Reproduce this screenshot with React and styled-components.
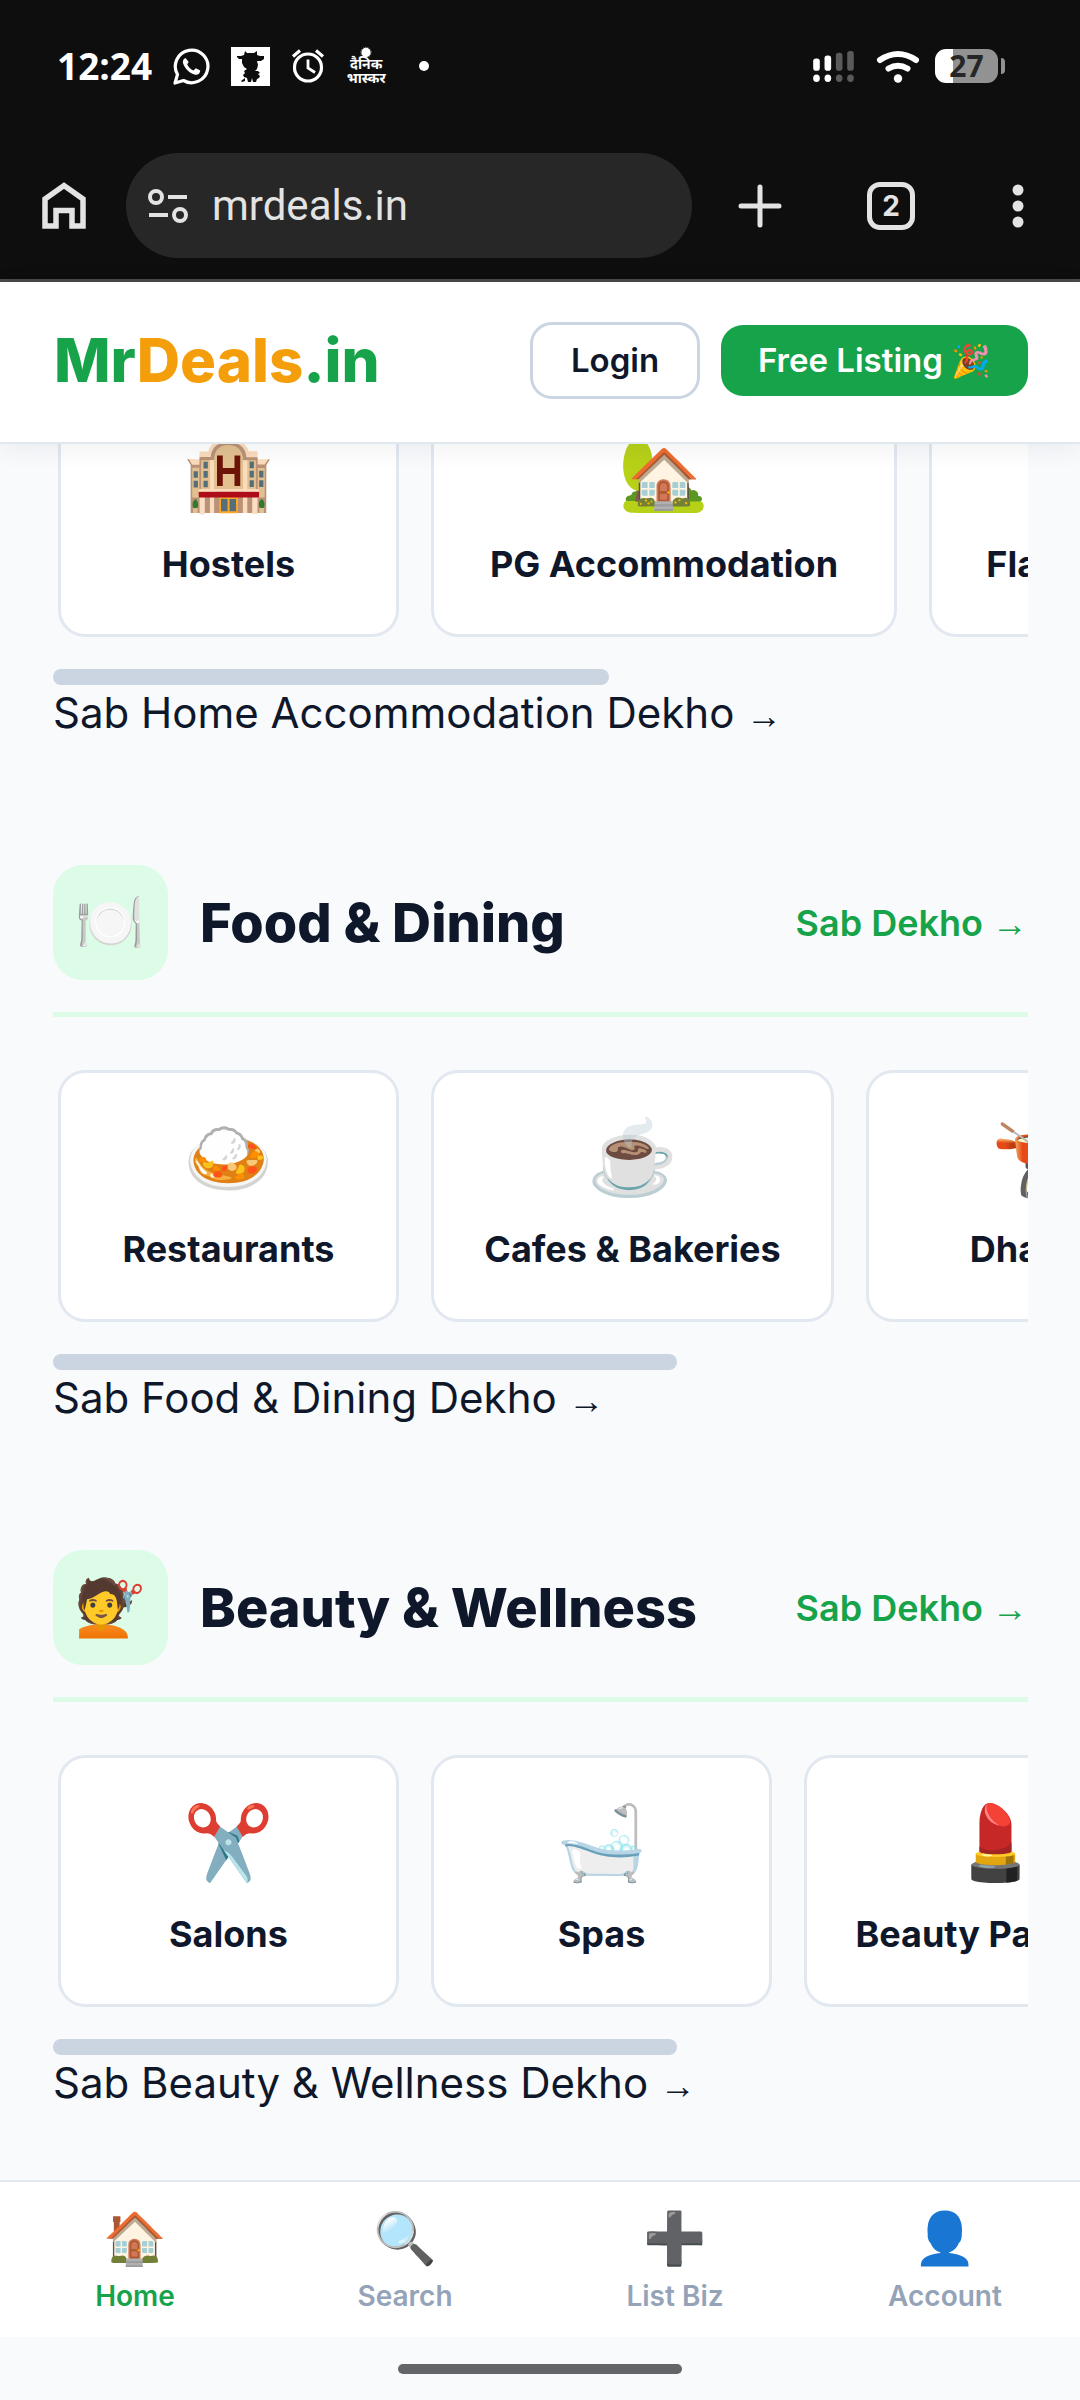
import React, { useState } from 'react';
import styled, { createGlobalStyle } from 'styled-components';

const sections = [
  {
    id: 'home',
    more: 'Sab Home Accommodation Dekho',
    thumb: 57,
    items: [
      { icon: '🏨', name: 'Hostels', width: 341 },
      { icon: '🏡', name: 'PG Accommodation', width: 466 },
      { icon: '🏢', name: 'Flats & Apartments', width: 450 },
    ],
  },
  {
    id: 'food',
    icon: '🍽️',
    title: 'Food & Dining',
    more: 'Sab Food & Dining Dekho',
    thumb: 64,
    items: [
      { icon: '🍛', name: 'Restaurants', width: 341 },
      { icon: '☕', name: 'Cafes & Bakeries', width: 403 },
      { icon: '🫕', name: 'Dhabas', width: 341 },
    ],
  },
  {
    id: 'beauty',
    icon: '💇',
    title: 'Beauty & Wellness',
    more: 'Sab Beauty & Wellness Dekho',
    thumb: 64,
    items: [
      { icon: '✂️', name: 'Salons', width: 341 },
      { icon: '🛁', name: 'Spas', width: 341 },
      { icon: '💄', name: 'Beauty Parlours', width: 384 },
    ],
  },
];

const tabs = [
  { id: 'home', icon: '🏠', name: 'Home' },
  { id: 'search', icon: '🔍', name: 'Search' },
  { id: 'list', icon: '➕', name: 'List Biz' },
  { id: 'account', icon: '👤', name: 'Account' },
];

const StatusBar = () => (
  <Status>
    <StatusGroup>
      <Time>12:24</Time>
      {/* whatsapp */}
      <svg width="37" height="37" viewBox="0 0 37 37" fill="none">
        <path
          d="M2 35l2.500-8.500A16.300 16.300 0 1 1 10.500 32.500z"
          stroke="#fff"
          strokeWidth="3.2"
          strokeLinejoin="round"
        />
        <path
          d="M12.500 10c-2.500 1-3.200 3.500-2.200 6 2 5 6 9 11 10.500 3 1 5.800-.5 6-4l-4.500-2.300-2.300 2.300c-3-1.200-5-3.200-6.300-6.200l1.500-2.300z"
          fill="#fff"
        />
      </svg>
      {/* mascot */}
      <svg width="39" height="39" viewBox="0 0 39 39">
        <path d="M0 0h39v39H0z" fill="#fff" />
        <path
          d="M14 4l2 2h7l3-2v4l3 1h4v3l-3 2h-4l1 4-1 4-2 2h3l2 2-2 1 2 2-1 2-2 1-1 3h-3l-1-4-1 4h-3l-1-4-3-1-1-2 2-2-1-2 3-2-3-2-2-4v-4H8l-2-2V9h4l3-1z"
          fill="#0e0e0e"
        />
        <path d="M10 34l4-3v3l-3 1z" fill="#0e0e0e" />
      </svg>
      {/* alarm */}
      <svg width="34" height="34" viewBox="0 0 34 34" fill="none" stroke="#fff">
        <circle cx="17" cy="18.5" r="13.5" strokeWidth="3.2" />
        <path d="M17 10.500v8.500l7 4.500" strokeWidth="2.8" />
        <path d="M2 7.500l7-6M32 7.500l-7-6" strokeWidth="3.2" />
      </svg>
      <NewsBadge>
        <svg width="14" height="13" viewBox="0 0 14 14">
          <circle cx="7" cy="7" r="5" fill="#fff" />
          <circle
            cx="7"
            cy="7"
            r="5.5"
            fill="none"
            stroke="#aaa"
            strokeDasharray="1 1"
          />
        </svg>
        <span>दैनिक</span>
        <span>भास्कर</span>
      </NewsBadge>
      <Dot />
    </StatusGroup>
    <StatusGroup>
      {/* two sims */}
      <svg width="43" height="34" viewBox="0 0 43 36">
        <g fill="#fff">
          <rect x="0" y="10" width="7" height="13" rx="3" />
          <rect x="12" y="7" width="7" height="16" rx="3" />
          <ellipse cx="3.5" cy="31" rx="3.5" ry="4" />
          <ellipse cx="15.5" cy="31" rx="3.5" ry="4" />
        </g>
        <g fill="#5a5a5a">
          <rect x="24" y="4" width="7" height="19" rx="3" />
          <rect x="36" y="2" width="7" height="21" rx="3" />
          <ellipse cx="27.5" cy="31" rx="3.5" ry="4" />
          <ellipse cx="39.5" cy="31" rx="3.5" ry="4" />
        </g>
      </svg>
      <svg width="44" height="34" viewBox="0 0 44 34" fill="none">
        <path
          d="M4 11Q22-1 40 11M12.500 19.500Q22 14 31.500 19.500"
          stroke="#fff"
          strokeWidth="6"
          strokeLinecap="round"
        />
        <circle cx="22" cy="29.5" r="4.2" fill="#fff" />
      </svg>
      <BatteryWrap>
        <Battery>27</Battery>
        <BatteryCap />
      </BatteryWrap>
    </StatusGroup>
  </Status>
);

const BrowserBar = () => (
  <Toolbar>
    <ToolButton aria-label="Home page">
      <svg width="44" height="48" viewBox="0 0 44 48" fill="none">
        <path
          d="M3 17L22 3.500l19 13.500V44H30V28.500H14V44H3z"
          stroke="#e3e3e3"
          strokeWidth="5.5"
        />
      </svg>
    </ToolButton>
    <AddressBox>
      <svg width="40" height="34" viewBox="0 0 40 34" fill="none">
        <g stroke="#e3e3e3" strokeWidth="4">
          <circle cx="8" cy="8" r="6" />
          <circle cx="32" cy="26" r="6" />
          <path d="M20 8h19M1 26h19" />
        </g>
      </svg>
      <Address aria-label="Address" defaultValue="mrdeals.in" />
    </AddressBox>
    <Tools>
      <ToolButton aria-label="New tab">
        <svg width="44" height="44" viewBox="0 0 44 44">
          <path
            d="M22 3v38M3 22h38"
            stroke="#e3e3e3"
            strokeWidth="5"
            strokeLinecap="round"
          />
        </svg>
      </ToolButton>
      <TabCount aria-label="Tabs">2</TabCount>
      <MenuButton aria-label="Menu">
        <svg width="12" height="44" viewBox="0 0 12 44" fill="#e3e3e3">
          <circle cx="6" cy="6" r="5.5" />
          <circle cx="6" cy="22" r="5.5" />
          <circle cx="6" cy="38" r="5.5" />
        </svg>
      </MenuButton>
    </Tools>
  </Toolbar>
);

const App = () => {
  const [current, setCurrent] = useState('home');

  return (
    <Screen>
      <GlobalStyle />
      <Chrome>
        <StatusBar />
        <BrowserBar />
      </Chrome>
      <Header>
        <Logo href="#">
          Mr<span>Deals</span>.in
        </Logo>
        <Actions>
          <LoginButton>Login</LoginButton>
          <ListingButton>
            Free Listing <Emoji>🎉</Emoji>
          </ListingButton>
        </Actions>
      </Header>
      {/* the list is scrolled to its end */}
      <Main>
        {sections.map(section => (
          <Section key={section.id}>
            {section.title && (
              <SectionHead>
                <SectionIcon>{section.icon}</SectionIcon>
                <Title>{section.title}</Title>
                <SeeAll href="#">
                  Sab Dekho <Arrow>→</Arrow>
                </SeeAll>
              </SectionHead>
            )}
            <Cards>
              {section.items.map(item => (
                <Card key={item.name} href="#" $width={item.width}>
                  <CardIcon>{item.icon}</CardIcon>
                  <CardName>{item.name}</CardName>
                </Card>
              ))}
            </Cards>
            <Thumb $size={section.thumb} />
            <More href="#">
              {section.more} <Arrow>→</Arrow>
            </More>
          </Section>
        ))}
      </Main>
      <BottomNav>
        {tabs.map(tab => (
          <NavButton
            key={tab.id}
            $active={tab.id === current}
            onClick={() => setCurrent(tab.id)}
          >
            <NavIcon>{tab.icon}</NavIcon>
            {tab.name}
          </NavButton>
        ))}
      </BottomNav>
      <Gesture>
        <GestureBar />
      </Gesture>
    </Screen>
  );
};

const GlobalStyle = createGlobalStyle`
  * {
    box-sizing: border-box;
  }

  body {
    margin: 0;
    background: #f8fafc;
    color: #0f172a;
    font-family: Inter, 'Noto Color Emoji', sans-serif;
  }

  svg {
    display: block;
  }

  a {
    color: inherit;
    text-decoration: none;
  }

  button {
    padding: 0;
    border: none;
    background: none;
    color: inherit;
    font-family: inherit;
  }
`;

const Screen = styled.div`
  display: flex;
  flex-direction: column;
  height: 100vh;
`;

const Chrome = styled.div`
  flex-shrink: 0;
  background: #0e0e0e;
  border-bottom: 3px solid #4a4949;
`;

const Status = styled.div`
  display: flex;
  justify-content: space-between;
  align-items: center;
  height: 132px;
  padding: 0 75px 0 57px;
`;

const StatusGroup = styled.div`
  display: flex;
  align-items: center;
  gap: 21px;
`;

const Time = styled.span`
  color: #fff;
  font-family: 'Open Sans', sans-serif;
  font-size: 37px;
  font-weight: 700;
  line-height: 44px;
`;

const NewsBadge = styled.span`
  display: flex;
  flex-direction: column;
  align-items: center;
  width: 40px;
  color: #fff;
  font-family: 'Noto Sans Devanagari', 'Noto Sans', sans-serif;
  font-size: 14px;
  font-weight: 700;
  line-height: 14px;
`;

const Dot = styled.span`
  width: 10px;
  height: 10px;
  margin-left: 12px;
  border-radius: 50%;
  background: #fff;
`;

const BatteryWrap = styled.span`
  display: flex;
  align-items: center;
  gap: 3px;
  margin-left: -6px;
`;

const Battery = styled.span`
  width: 63px;
  height: 34px;
  border-radius: 11px;
  background: linear-gradient(to right, #fff 18px, #929292 18px);
  color: #262626;
  font-family: 'Open Sans', sans-serif;
  font-size: 30px;
  font-weight: 700;
  line-height: 34px;
  text-align: center;
`;

const BatteryCap = styled.span`
  width: 4px;
  height: 16px;
  border-radius: 0 4px 4px 0;
  background: #929292;
`;

const Toolbar = styled.div`
  display: flex;
  align-items: center;
  gap: 40px;
  padding: 21px 56px 21px 42px;
`;

const ToolButton = styled.button`
  display: flex;
`;

const MenuButton = styled(ToolButton)`
  && {
    padding-left: 12px;
  }
`;

const AddressBox = styled.div`
  display: flex;
  flex: 1;
  align-items: center;
  gap: 24px;
  min-width: 0;
  height: 105px;
  padding: 0 22px;
  border-radius: 53px;
  background: #272727;
`;

const Address = styled.input`
  flex: 1;
  min-width: 0;
  padding: 0;
  border: none;
  outline: none;
  background: none;
  color: #e3e3e3;
  font-family: Roboto, sans-serif;
  font-size: 42px;
`;

const Tools = styled.div`
  display: flex;
  flex-shrink: 0;
  align-items: center;
  gap: 85px;
  padding-left: 6px;
`;

const TabCount = styled.button`
  width: 48px;
  height: 48px;
  && {
    border: 5px solid #e3e3e3;
  }
  border-radius: 13px;
  color: #e3e3e3;
  font-size: 28px;
  font-weight: 700;
`;

const Header = styled.header`
  display: flex;
  flex-shrink: 0;
  justify-content: space-between;
  align-items: center;
  height: 162px;
  padding: 0 52px 4px 54px;
  background: #fff;
  border-bottom: 2px solid #e2e8f0;
  box-shadow: 0 4px 24px rgba(15, 23, 42, 0.07);
  z-index: 1;
`;

const Logo = styled.a`
  color: #16a34a;
  font-size: 60px;
  font-weight: 800;

  span {
    color: #f59e0b;
  }
`;

const Actions = styled.div`
  display: flex;
  align-items: center;
  gap: 21px;
  font-size: 33px;
`;

const LoginButton = styled.button`
  width: 170px;
  height: 77px;
  && {
    border: 3px solid #cbd5e1;
  }
  border-radius: 22px;
  font-size: inherit;
  font-weight: 600;
`;

const ListingButton = styled.button`
  width: 307px;
  height: 71px;
  && {
    background: #16a34a;
    color: #fff;
  }
  border-radius: 22px;
  font-size: inherit;
  font-weight: 600;
`;

const Emoji = styled.span`
  font-size: 32px;
`;

const Main = styled.main`
  display: flex;
  flex: 1;
  flex-direction: column;
  justify-content: flex-end;
  gap: 124px;
  min-height: 0;
  padding: 0 52px 69px 53px;
  overflow: hidden;
`;

const Section = styled.section`
  flex-shrink: 0;
`;

const SectionHead = styled.div`
  display: flex;
  align-items: center;
  gap: 32px;
  padding-bottom: 32px;
  margin-bottom: 53px;
  border-bottom: 5px solid #dcfce7;
`;

const SectionIcon = styled.span`
  width: 115px;
  height: 115px;
  border-radius: 30px;
  background: #dcfce7;
  font-size: 56px;
  line-height: 115px;
  text-align: center;
`;

const Title = styled.h2`
  flex: 1;
  margin: 0;
  font-size: 54px;
  font-weight: 800;
`;

const SeeAll = styled.a`
  color: #16a34a;
  font-size: 36px;
  font-weight: 600;
`;

const Arrow = styled.span`
  font-family: 'Liberation Sans', sans-serif;
  font-size: 36px;
  line-height: 1;
`;

const Cards = styled.div`
  display: flex;
  gap: 32px;
  padding: 0 5px 32px;
  overflow: hidden;
`;

const Card = styled.a`
  display: flex;
  flex-direction: column;
  flex-shrink: 0;
  align-items: center;
  gap: 32px;
  min-width: ${({ $width }) => $width}px;
  padding: 44px 32px 50px;
  border: 3px solid #e2e8f0;
  border-radius: 27px;
  background: #fff;
`;

const CardIcon = styled.span`
  font-size: 73px;
  line-height: 80px;
`;

const CardName = styled.span`
  font-size: 36px;
  font-weight: 700;
  line-height: 40px;
  white-space: nowrap;
`;

const Thumb = styled.div`
  width: ${({ $size }) => $size}%;
  height: 16px;
  border-radius: 8px;
  background: #cbd5e1;
`;

const More = styled.a`
  display: block;
  font-size: 42px;
  line-height: 56px;
`;

const BottomNav = styled.nav`
  display: grid;
  flex-shrink: 0;
  grid-template-columns: repeat(4, 1fr);
  height: 157px;
  padding-top: 24px;
  background: #fff;
  border-top: 2px solid #e2e8f0;
`;

const NavButton = styled.button`
  display: flex;
  flex-direction: column;
  align-items: center;
  && {
    color: ${({ $active }) => ($active ? '#16a34a' : '#94a3b8')};
  }
  font-size: 28px;
  font-weight: 600;
  line-height: 40px;
`;

const NavIcon = styled.span`
  margin-bottom: 6px;
  font-size: 51px;
  line-height: 64px;
`;

const Gesture = styled.div`
  display: flex;
  flex-shrink: 0;
  justify-content: center;
  height: 63px;
  padding-top: 27px;
`;

const GestureBar = styled.span`
  width: 284px;
  height: 10px;
  border-radius: 5px;
  background: #646568;
`;

export default App;
